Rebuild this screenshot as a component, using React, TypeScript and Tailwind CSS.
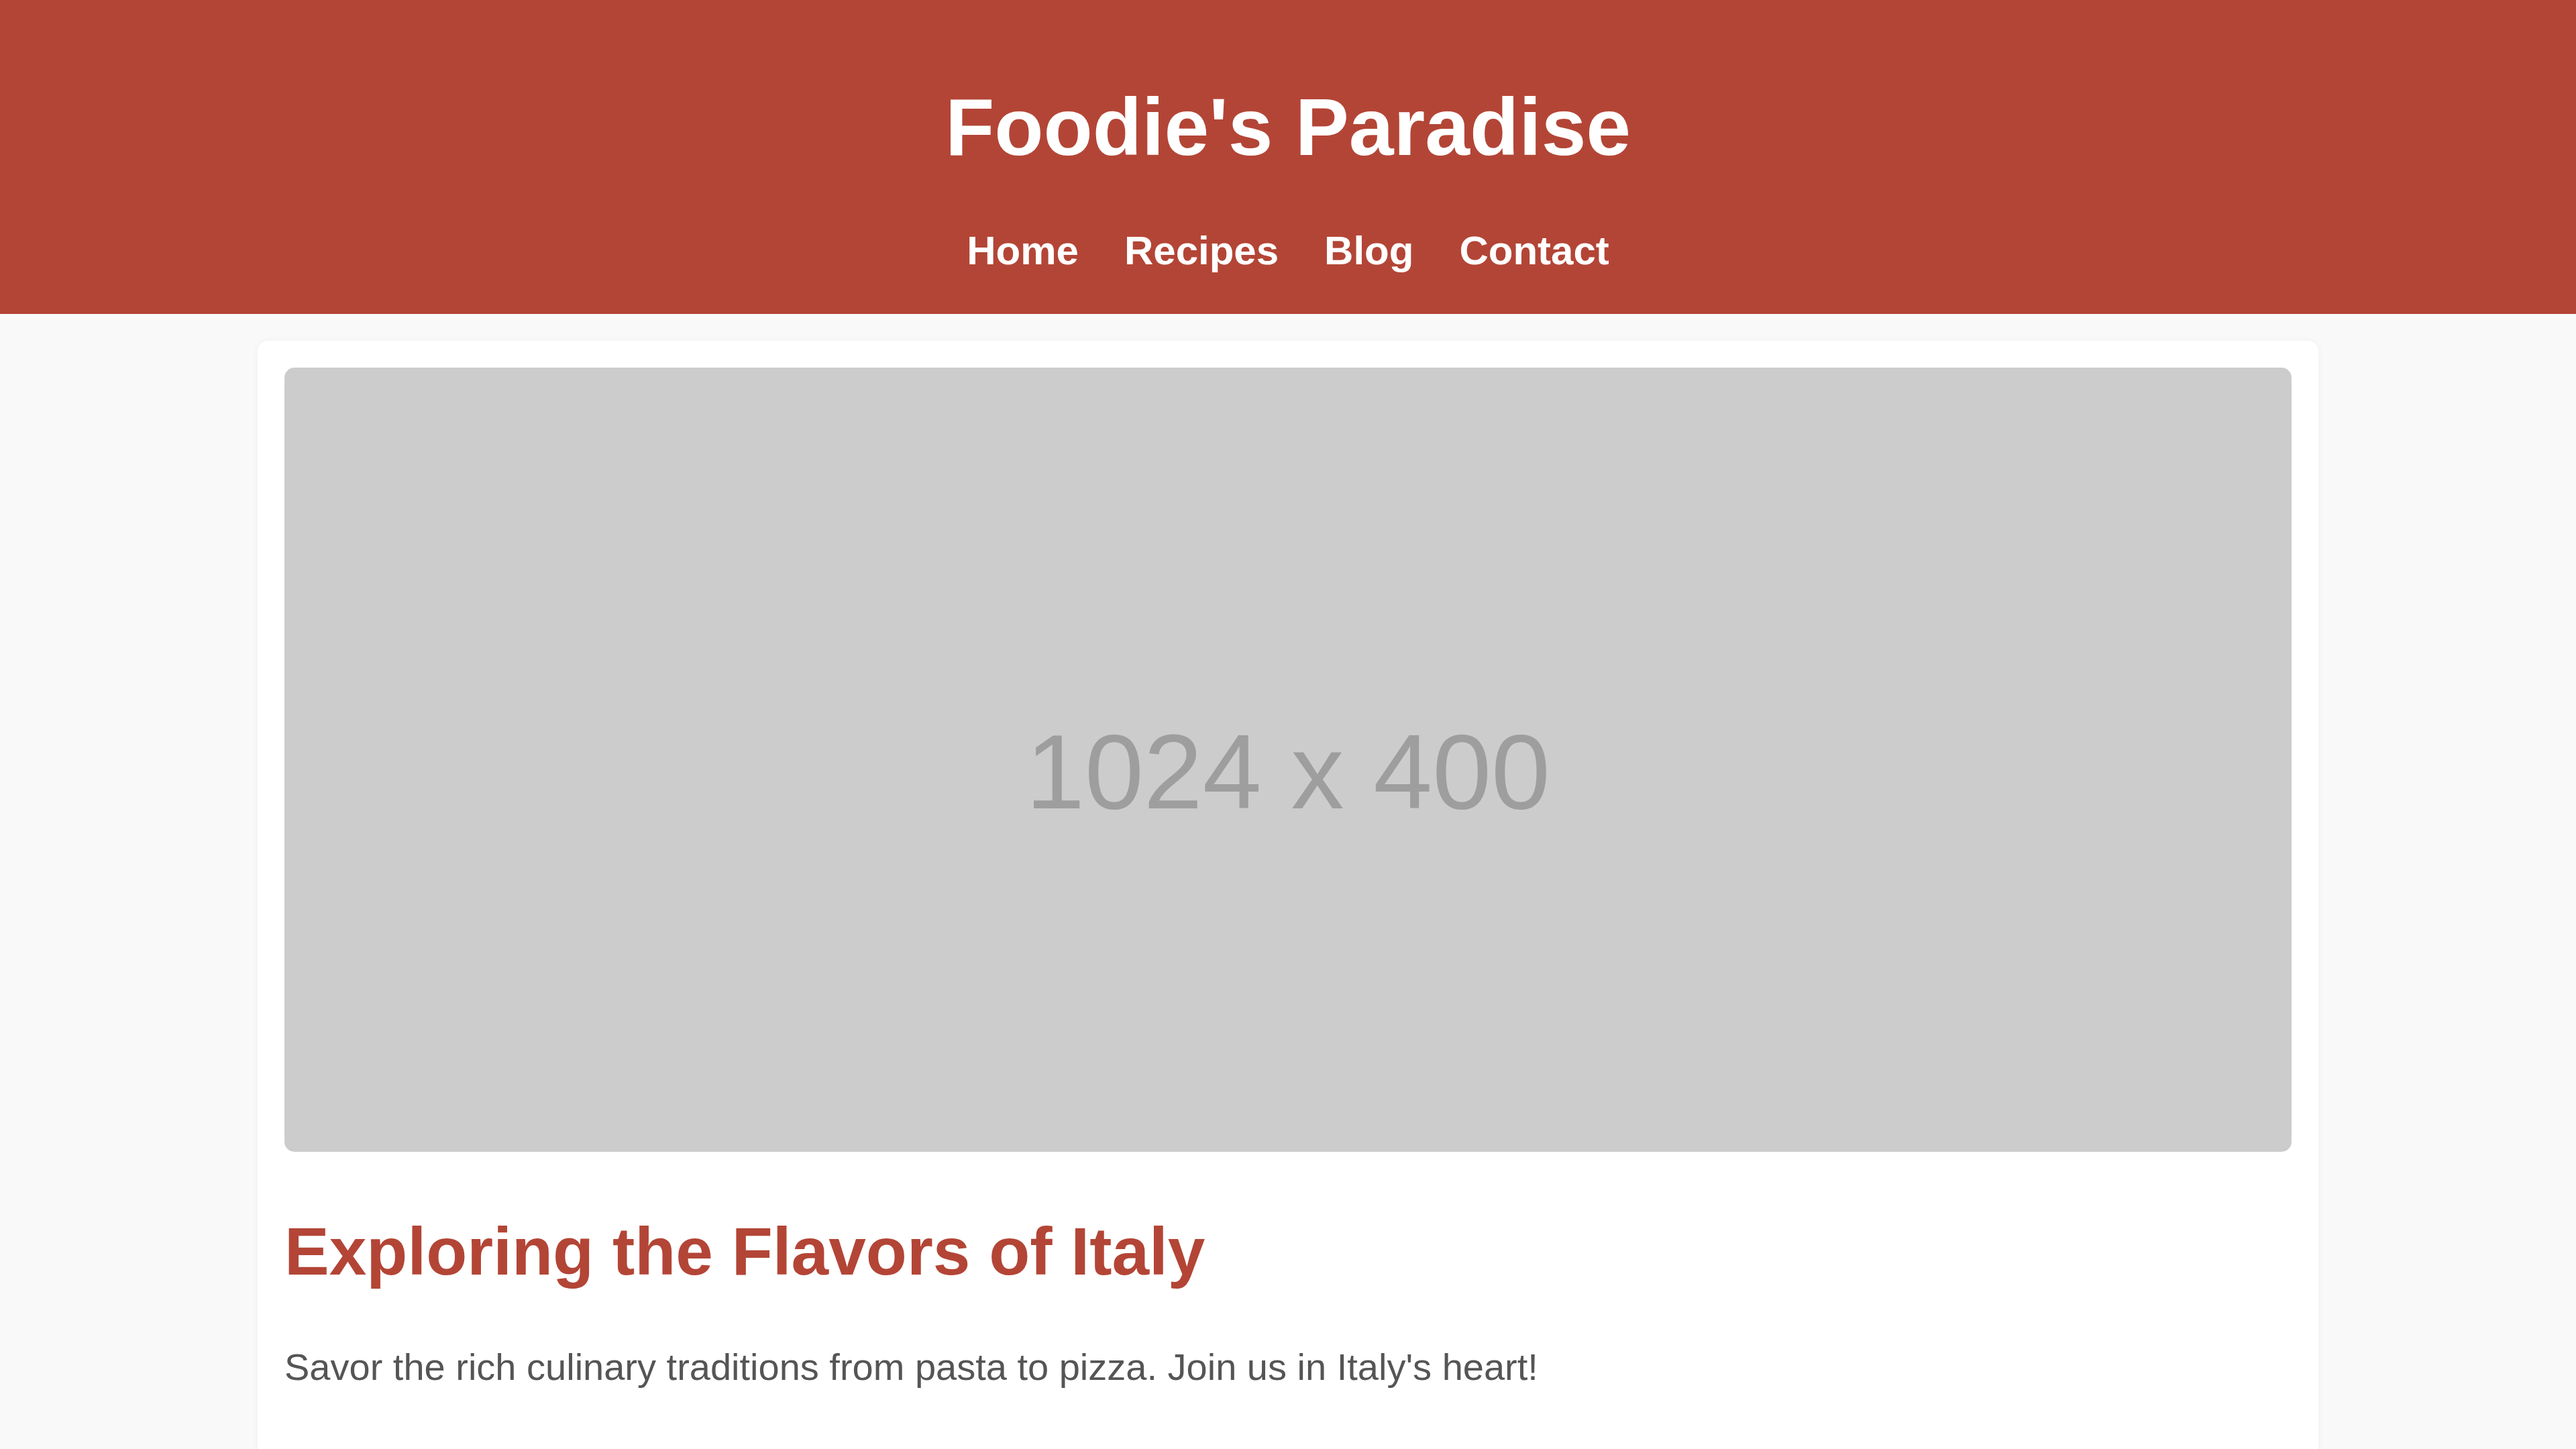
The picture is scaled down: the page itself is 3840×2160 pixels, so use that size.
export default function App() {
  const links = ["Home", "Recipes", "Blog", "Contact"];

  return (
    <div className="min-h-screen bg-[#f9f9f9] font-['Liberation_Sans',Arial,sans-serif]">
      <header className="bg-[#b34536] pt-[120px] pb-[60px] text-center text-white">
        <h1 className="text-[120px] font-bold leading-[138px]">Foodie's Paradise</h1>
        <nav className="mt-[81px] flex justify-center gap-[68px]">
          {links.map((link) => (
            <a key={link} href="#" className="text-[60px] font-bold leading-[69px] text-white">
              {link}
            </a>
          ))}
        </nav>
      </header>

      <main className="mx-auto mt-[40px] w-[3072px] rounded-[16px] bg-white p-[40px] pb-[120px] shadow-[0_0_12px_rgba(0,0,0,0.04)]">
        <div className="flex aspect-[1024/400] w-full items-center justify-center rounded-[15px] bg-[#cccccc] pt-[36px]">
          <span className="text-[158px] leading-none text-[#9e9e9e]">1024 x 400</span>
        </div>

        <h2 className="mt-[91px] text-[100px] font-bold leading-[115px] text-[#b34536]">
          Exploring the Flavors of Italy
        </h2>
        <p className="mt-[83px] text-[56px] leading-[64px] text-[#555555]">
          Savor the rich culinary traditions from pasta to pizza. Join us in Italy's heart!
        </p>
      </main>
    </div>
  );
}
